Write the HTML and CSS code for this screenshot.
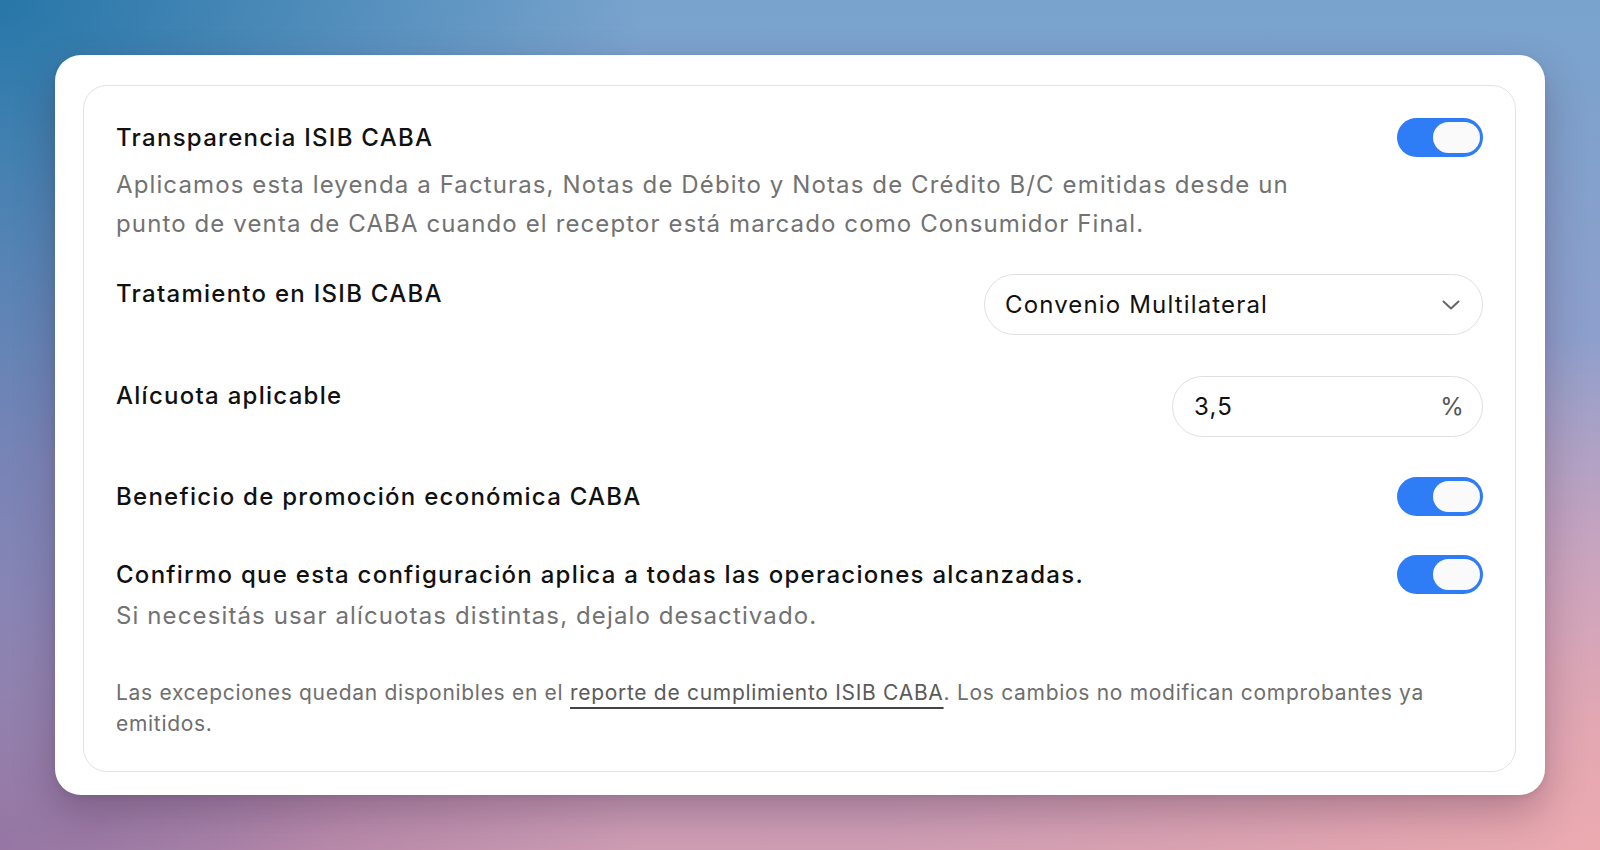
FILE: index.html
```html
<!DOCTYPE html>
<html lang="es">

<head>
    <meta charset="UTF-8">
    <meta name="viewport" content="width=device-width, initial-scale=1.0">
    <title>Transparencia ISIB CABA</title>
    <link rel="stylesheet" href="styles.css">
</head>

<body>
    <div class="panel">
        <div class="settings">
            <div class="row">
                <div class="row_text">
                    <div class="label">Transparencia ISIB CABA</div>
                    <p class="desc">Aplicamos esta leyenda a Facturas, Notas de Débito y Notas de Crédito B/C emitidas desde un punto de venta de CABA cuando el receptor está marcado como Consumidor Final.</p>
                </div>
                <span class="toggle on"><span class="knob"></span></span>
            </div>

            <div class="row row_select">
                <div class="label">Tratamiento en ISIB CABA</div>
                <div class="select">
                    <span>Convenio Multilateral</span>
                    <svg class="chevron" width="18" height="10" viewBox="0 0 18 10">
                        <path d="M1.5 1.5 L9 8.5 L16.5 1.5" fill="none" stroke="#666" stroke-width="2" stroke-linecap="round" stroke-linejoin="round" />
                    </svg>
                </div>
            </div>

            <div class="row row_input">
                <div class="label">Alícuota aplicable</div>
                <div class="field">
                    <span>3,5</span>
                    <span class="unit">%</span>
                </div>
            </div>

            <div class="row row_toggle">
                <div class="label">Beneficio de promoción económica CABA</div>
                <span class="toggle on"><span class="knob"></span></span>
            </div>

            <div class="row row_toggle last">
                <div class="row_text">
                    <div class="label">Confirmo que esta configuración aplica a todas las operaciones alcanzadas.</div>
                    <p class="desc sub">Si necesitás usar alícuotas distintas, dejalo desactivado.</p>
                </div>
                <span class="toggle on"><span class="knob"></span></span>
            </div>

            <p class="note"><span>Las excepciones quedan disponibles en el </span><a href="#" class="link">reporte de cumplimiento ISIB CABA</a><span>. Los cambios no modifican comprobantes ya </span><span>emitidos.</span></p>
        </div>
    </div>
</body>

</html>
```

FILE: styles.css
```css
* {
    margin: 0;
    padding: 0;
    box-sizing: border-box;
}

html,
body {
    height: 100%;
}

body {
    display: flex;
    align-items: center;
    justify-content: center;
    font-family: Inter, "Noto Sans", "Liberation Sans", sans-serif;
    color: #111;
    background:
        radial-gradient(ellipse 40% 55% at 0% 0%, rgba(34, 116, 166, 0.95), rgba(34, 116, 166, 0) 100%),
        radial-gradient(ellipse 30% 60% at 0% 55%, rgba(110, 124, 176, 0.8), rgba(110, 124, 176, 0) 100%),
        radial-gradient(ellipse 40% 45% at 0% 100%, rgba(160, 116, 160, 1), rgba(160, 116, 160, 0) 100%),
        radial-gradient(ellipse 45% 60% at 100% 100%, rgba(236, 170, 176, 1), rgba(236, 170, 176, 0) 100%),
        linear-gradient(180deg, #78a3cd 0%, #8e9fcc 40%, #b4a0c8 70%, #d09eb4 100%);
}

.panel {
    width: 1490px;
    padding: 30px 29px 23px 28px;
    background-color: #fff;
    border-radius: 26px;
    box-shadow: 0 18px 40px rgba(60, 30, 60, 0.3), 0 2px 6px rgba(0, 0, 0, 0.08);
}

.settings {
    border: 1px solid #e3e3e3;
    border-radius: 24px;
    padding: 32px;
}

.row {
    display: flex;
    justify-content: space-between;
    align-items: flex-start;
    gap: 40px;
}

.label {
    font-size: 24px;
    line-height: 40px;
    font-weight: 500;
    letter-spacing: 1.27px;
    color: #111;
}

.desc {
    margin-top: 8px;
    max-width: 1200px;
    font-size: 24px;
    line-height: 38.5px;
    letter-spacing: 1.12px;
    color: #727272;
}

.desc.sub {
    margin-top: 2px;
}

.row_select {
    margin-top: 31px;
}

.row_input {
    margin-top: 41px;
}

.row_toggle {
    margin-top: 40px;
}

.row_toggle.last {
    margin-top: 38px;
}

/* 开关 */
.toggle {
    flex: none;
    display: flex;
    justify-content: flex-end;
    align-items: center;
    width: 86px;
    height: 39px;
    padding: 4px 3px;
    border-radius: 20px;
    background-color: #d9d9d9;
}

.toggle.on {
    background-color: #2f7df6;
}

.knob {
    width: 47px;
    height: 31px;
    border-radius: 16px;
    background-color: #fafafa;
}

.select,
.field {
    flex: none;
    display: flex;
    align-items: center;
    justify-content: space-between;
    height: 61px;
    border: 1.5px solid #e0e0e0;
    border-radius: 31px;
    font-size: 24px;
    letter-spacing: 1.15px;
    color: #111;
}

.select {
    width: 499px;
    padding: 0 22px 0 20px;
}

.field {
    width: 311px;
    padding: 0 17px 0 21px;
}

.field .unit {
    color: #555;
}

.note {
    margin-top: 41px;
    font-size: 21px;
    line-height: 31px;
    letter-spacing: 0.7px;
    color: #6e6e6e;
}

.link {
    color: #5a5a5a;
    text-decoration: underline;
    text-decoration-color: #444;
    text-decoration-thickness: 1.5px;
    text-underline-offset: 7px;
}
```
